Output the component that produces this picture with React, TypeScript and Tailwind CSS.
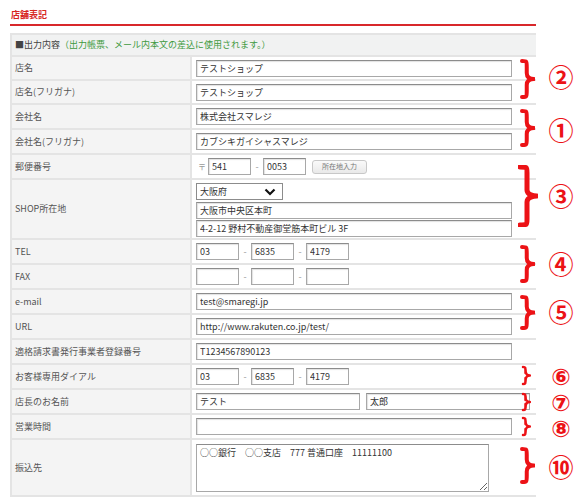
import React from 'react';

const font = "font-['Noto_Sans_CJK_JP','Noto_Sans',sans-serif]";

type FieldProps = { value?: string; className?: string };

const Field: React.FC<FieldProps> = ({ value = '', className = '' }) => (
  <input
    readOnly
    defaultValue={value}
    className={`h-[17px] border border-[#a8a8a8] border-t-[#8c8c8c] bg-white px-[3px] text-[9px] text-[#333] outline-none shadow-[inset_1px_1px_1px_rgba(0,0,0,0.12)] ${className}`}
  />
);

const Dash = () => <span className="w-[12px] text-center text-[9px] text-[#999]">-</span>;

const Row: React.FC<{ label: string; h: string; children: React.ReactNode }> = ({ label, h, children }) => (
  <div className={`flex border-b-2 border-[#e4e4e4] ${h}`}>
    <div className="w-[180px] shrink-0 flex items-center pl-[3px] bg-[#f4f4f4] border-r-2 border-[#e4e4e4] text-[9px] text-[#555]">
      {label}
    </div>
    <div className="flex-1 flex items-center pl-[4px]">{children}</div>
  </div>
);

const Phone: React.FC<{ a?: string; b?: string; c?: string }> = ({ a, b, c }) => (
  <div className="flex items-center">
    <Field value={a} className="w-[43px]" />
    <Dash />
    <Field value={b} className="w-[43px]" />
    <Dash />
    <Field value={c} className="w-[43px]" />
  </div>
);

// red annotation brace + circled number
const Brace: React.FC<{ top: number; h: number; w?: number; sw?: number; left?: number }> = ({ top, h, w = 15, sw = 4, left = 520 }) => {
  const xm = w * 0.45;
  const xr = w - 1;
  const m = h / 2;
  const d = `M2 2 C${xm} 2 ${xm} 2 ${xm} 8 L${xm} ${m - 6} C${xm} ${m - 1} ${xr - 3} ${m} ${xr} ${m} C${xr - 3} ${m} ${xm} ${m + 1} ${xm} ${m + 6} L${xm} ${h - 8} C${xm} ${h - 2} ${xm} ${h - 2} 2 ${h - 2}`;
  return (
    <svg className="absolute" style={{ top, left }} width={w} height={h} viewBox={`0 0 ${w} ${h}`}>
      <path d={d} fill="none" stroke="#ec1216" strokeWidth={sw} strokeLinecap="round" strokeLinejoin="round" />
    </svg>
  );
};

const Num: React.FC<{ top: number; n: string; small?: boolean }> = ({ top, n, small }) => (
  <span
    className={`absolute left-[548px] w-[26px] text-center font-bold text-[#ec1216] ${
      small
        ? "font-['DejaVu_Sans','Noto_Sans_CJK_JP',sans-serif] text-[23px] leading-[20px] h-[20px]"
        : 'text-[25px] leading-none'
    }`}
    style={{ top }}
  >
    {n}
  </span>
);

export default function App() {
  return (
    <div className={`relative w-[584px] h-[503px] bg-white overflow-hidden ${font}`}>
      <div className="pl-[10px] pr-[48px] pt-[8px]">
        <h2 className="h-[16px] pl-[1px] text-[9px] leading-[14px] font-bold text-[#d7261e]">店舗表記</h2>
        <div className="h-[2px] bg-[#d8282b]" />

        <div className="mt-[7px] border-t-2 border-l-2 border-[#e4e4e4]">
          <div className="h-[22px] flex items-center pl-[3px] bg-[#f1f2f2] border-b-2 border-[#e4e4e4] text-[9px] text-[#444]">
            ■出力内容<span className="text-[#3f9a3f]">（出力帳票、メール内本文の差込に使用されます。）</span>
          </div>

          <Row label="店名" h="h-[24px]"><Field value="テストショップ" className="w-[316px]" /></Row>
          <Row label="店名(フリガナ)" h="h-[24px]"><Field value="テストショップ" className="w-[316px]" /></Row>
          <Row label="会社名" h="h-[25px]"><Field value="株式会社スマレジ" className="w-[316px]" /></Row>
          <Row label="会社名(フリガナ)" h="h-[25px]"><Field value="カブシキガイシャスマレジ" className="w-[316px]" /></Row>
          <Row label="郵便番号" h="h-[25px]">
            <div className="flex items-center">
              <span className="w-[12px] text-[8px] text-[#999] pl-[2px]">〒</span>
              <Field value="541" className="w-[43px]" />
              <Dash />
              <Field value="0053" className="w-[43px]" />
              <button className="ml-[6px] h-[14px] w-[55px] rounded-[3px] border border-[#c8c8c8] bg-gradient-to-b from-[#fafafa] to-[#e9e9e9] text-[7px] text-[#777]">
                所在地入力
              </button>
            </div>
          </Row>
          <Row label="SHOP所在地" h="h-[60px]">
            <div className="flex flex-col gap-[1px] pt-[2px]">
              <div className="mb-[1px] flex h-[17px] w-[87px] items-center justify-between border border-[#8c8c8c] px-[3px] text-[9px] text-[#333]">
                大阪府
                <svg width="12" height="8" viewBox="0 0 12 8" className="mr-[3px]">
                  <path d="M1.5 1.5 L6 6 L10.5 1.5" fill="none" stroke="#111" strokeWidth="2.2" />
                </svg>
              </div>
              <Field value="大阪市中央区本町" className="w-[316px]" />
              <Field value="4-2-12 野村不動産御堂筋本町ビル 3F" className="w-[316px]" />
            </div>
          </Row>
          <Row label="TEL" h="h-[25px]"><Phone a="03" b="6835" c="4179" /></Row>
          <Row label="FAX" h="h-[25px]"><Phone /></Row>
          <Row label="e-mail" h="h-[25px]"><Field value="test@smaregi.jp" className="w-[316px]" /></Row>
          <Row label="URL" h="h-[25px]"><Field value="http://www.rakuten.co.jp/test/" className="w-[316px]" /></Row>
          <Row label="適格請求書発行事業者登録番号" h="h-[25px]"><Field value="T1234567890123" className="w-[316px]" /></Row>
          <Row label="お客様専用ダイアル" h="h-[25px]"><Phone a="03" b="6835" c="4179" /></Row>
          <Row label="店長のお名前" h="h-[25px]">
            <div className="flex items-center gap-[6px]">
              <Field value="テスト" className="w-[164px]" />
              <Field value="太郎" className="w-[164px]" />
            </div>
          </Row>
          <Row label="営業時間" h="h-[25px]"><Field className="w-[316px]" /></Row>
          <Row label="振込先" h="h-[57px]">
            <textarea
              readOnly
              defaultValue={'○○銀行　○○支店　777 普通口座　11111100'}
              className="h-[48px] w-[293px] border border-[#a8a8a8] border-t-[#8c8c8c] px-[3px] py-[1px] text-[9px] text-[#333] outline-none"
            />
          </Row>
        </div>
      </div>

      <Brace top={59} h={40} />
      <Num top={64} n="②" />
      <Brace top={109} h={38} />
      <Num top={117} n="①" />
      <Brace top={165} h={62} w={20} sw={5} left={518} />
      <Num top={183} n="③" />
      <Brace top={245} h={38} />
      <Num top={251} n="④" />
      <Brace top={295} h={35} />
      <Num top={299} n="⑤" />
      <Brace top={365} h={21} w={10} sw={2.5} left={521} />
      <Num top={367} n="⑥" small />
      <Brace top={392} h={20} w={10} sw={2.5} left={521} />
      <Num top={393} n="⑦" small />
      <Brace top={416} h={21} w={10} sw={2.5} left={521} />
      <Num top={419} n="⑧" small />
      <Brace top={447} h={37} />
      <Num top={454} n="⑩" />
    </div>
  );
}
